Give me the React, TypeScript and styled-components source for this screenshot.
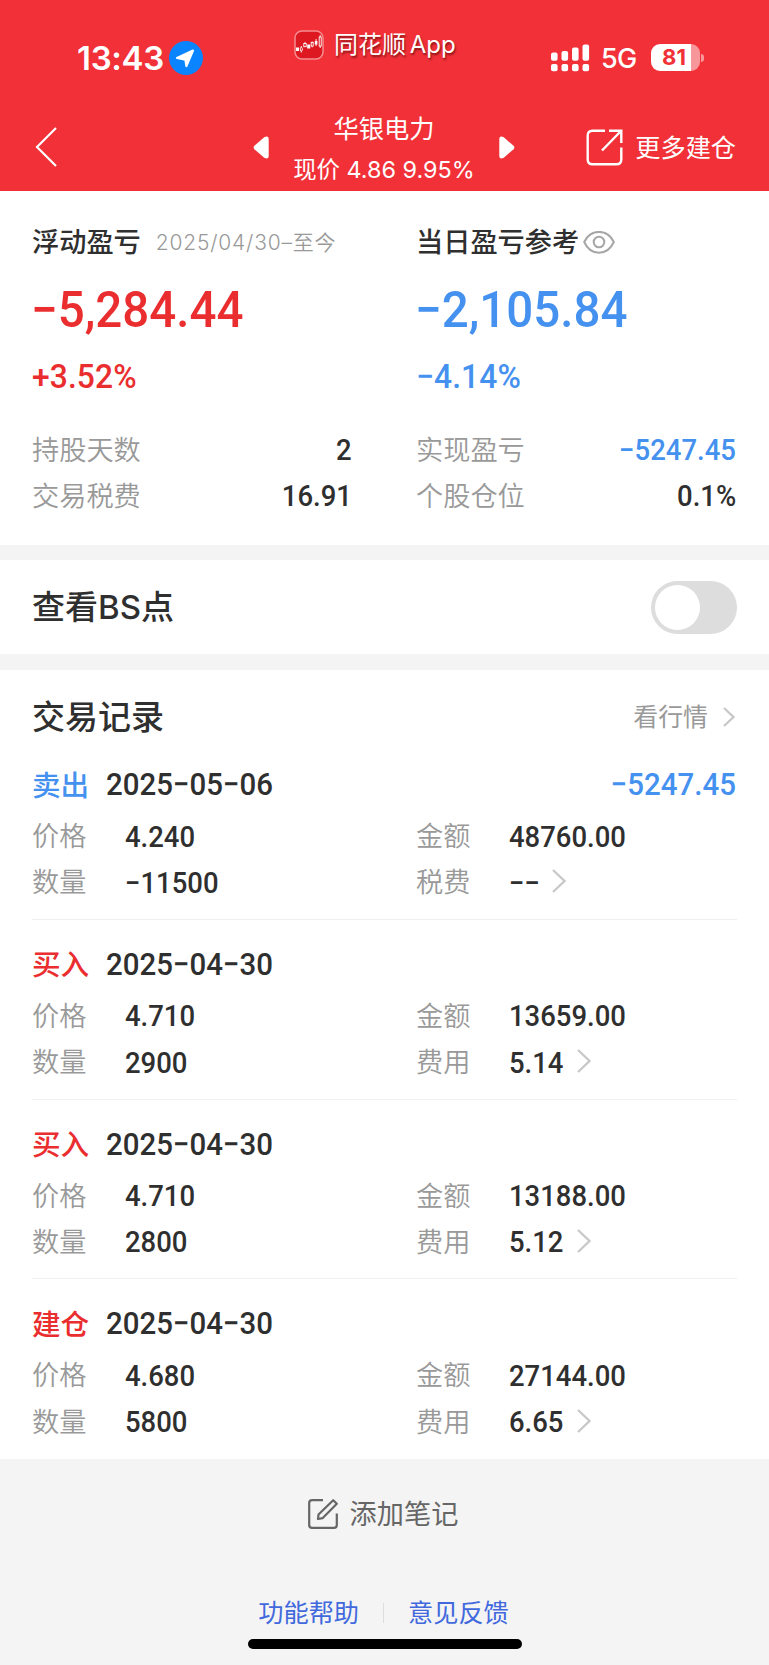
import React from "react";
import styled, { createGlobalStyle } from "styled-components";

const RED = "#f13038";
const TEXT_RED = "#ea2d2e";
const BLUE = "#4591ef";
const DARK = "#2f2f2f";
const GRAY = "#999";

const CJK = `Inter, "Noto Sans CJK SC", sans-serif`;
const NUM = `Roboto, "Noto Sans CJK SC", sans-serif`;

const GlobalStyle = createGlobalStyle`
  * { box-sizing: border-box; }
  body { margin: 0; background: #f4f4f4; font-family: ${CJK}; color: ${DARK}; }
`;

const Page = styled.div`
  width: 769px;
  height: 1665px;
  overflow: hidden;
  display: flex;
  flex-direction: column;
  background: #f4f4f4;
`;

/* ---------- header ---------- */

const Header = styled.header`
  flex: none;
  height: 191px;
  background: ${RED};
  color: #fff;
`;

const StatusBar = styled.div`
  display: grid;
  grid-template-columns: 217px 257px auto;
  height: 103px;
  padding: 29px 0 0 77px;
`;

const Clock = styled.div`
  display: flex;
  align-items: center;
  height: 57px;
  font-size: 33px;
  font-weight: 600;
  line-height: 57px;
  letter-spacing: -0.3px;
`;

const ClockText = styled.span`
  width: 92px;
  padding-top: 1px;
  white-space: nowrap;
`;

const AppTag = styled.div`
  display: flex;
  align-items: center;
  gap: 10px;
  height: 31px;
  font-size: 24px;
  line-height: 31px;
  word-spacing: -3px;
  white-space: nowrap;
  text-shadow: 1px 2px 2px rgba(70, 0, 0, 0.6);
`;

const Signals = styled.div`
  display: flex;
  align-items: center;
  height: 57px;
`;

const Network = styled.span`
  width: 49.5px;
  margin-left: 11px;
  padding-top: 2px;
  font-size: 27px;
  font-weight: 500;
  letter-spacing: -0.7px;
`;

const Battery = styled.div`
  display: flex;
  align-items: center;
  justify-content: center;
  width: 49px;
  height: 27px;
  padding-right: 2px;
  border-radius: 9px;
  background: linear-gradient(90deg, #fff 40px, #f8979b 40px);
  color: ${RED};
  font-size: 22px;
  font-weight: 700;
  line-height: 27px;
`;

const BatteryTip = styled.div`
  width: 3px;
  height: 8px;
  margin-left: 1.5px;
  border-radius: 0 4px 4px 0;
  background: #f8979b;
`;

const Nav = styled.nav`
  display: grid;
  grid-template-columns: 218px 262px 1fr;
  align-items: center;
  height: 88px;
  padding: 0 33px 0 35px;
`;

const StockSwitch = styled.div`
  display: flex;
  align-items: center;
  justify-content: space-between;
`;

const StockInfo = styled.div`
  display: flex;
  flex-direction: column;
  align-items: center;
  padding-top: 4px;
  white-space: nowrap;
`;

const StockName = styled.div`
  font-size: 25.3px;
  line-height: 41px;
`;

const StockQuote = styled.div`
  font-size: 23.4px;
  line-height: 41px;
`;

const MoreButton = styled.div`
  display: flex;
  align-items: center;
  justify-content: flex-end;
  gap: 12px;
  font-size: 25.2px;
  line-height: 38px;
  white-space: nowrap;

  span {
    padding-top: 1px;
  }
`;

/* ---------- summary ---------- */

const Section = styled.section<{ $height: number }>`
  flex: none;
  height: ${(p) => p.$height}px;
  padding: 0 32px;
  background: #fff;
`;

const Gap = styled.div<{ $height: number }>`
  flex: none;
  height: ${(p) => p.$height}px;
`;

const Columns = styled.div`
  display: grid;
  grid-template-columns: 1fr 1fr;
  column-gap: 63px;
`;

const SummaryColumn = styled.div`
  padding-top: 29px;
`;

const SummaryTitle = styled.div`
  display: flex;
  align-items: center;
  gap: 4px;
  height: 46px;
  font-size: 27.2px;
  font-weight: 500;
  line-height: 46px;
  white-space: nowrap;
`;

const DateRange = styled.span`
  margin-left: 11px;
  color: ${GRAY};
  font-size: 21px;
  font-weight: 350;
  letter-spacing: 0.8px;
`;

/* Condensed figures: Roboto narrowed towards the edge that the text is aligned to. */
const Figure = styled.div<{ $color?: string; $align?: "left" | "right" }>`
  color: ${(p) => p.$color ?? DARK};
  font-family: ${NUM};
  font-weight: 500;
  white-space: nowrap;
  transform: scaleX(0.935);
  transform-origin: ${(p) => p.$align ?? "left"} center;
`;

const BigNumber = styled(Figure)`
  margin: 14px 0 0 -1.5px;
  font-size: 50.8px;
  line-height: 60px;
`;

const Percent = styled(Figure)`
  margin-top: 13px;
  font-size: 34px;
  line-height: 46px;
  letter-spacing: 0.1px;
`;

const Stats = styled.div`
  margin-top: 28px;
`;

const StatRow = styled.div`
  display: flex;
  align-items: center;
  justify-content: space-between;
  height: 46.3px;
`;

const Label = styled.span`
  padding-top: 1px;
  color: ${GRAY};
  font-size: 27.2px;
  font-weight: 350;
  line-height: 46px;
  white-space: nowrap;
`;

const Value = styled(Figure)`
  margin-right: 1px;
  font-size: 29.4px;
  line-height: 46px;
`;

/* ---------- BS switch ---------- */

const SettingRow = styled.div`
  display: flex;
  align-items: center;
  justify-content: space-between;
  height: 94px;
`;

const Heading = styled.h2`
  margin: 0;
  font-size: 33px;
  font-weight: 500;
  line-height: 46px;
  white-space: nowrap;
`;

const Toggle = styled.div`
  width: 86px;
  height: 53px;
  padding: 4px;
  border-radius: 27px;
  background: #ddd;
`;

const Knob = styled.div`
  width: 45px;
  height: 45px;
  border-radius: 50%;
  background: #fff;
`;

/* ---------- records ---------- */

const RecordsHead = styled.div`
  display: flex;
  align-items: center;
  justify-content: space-between;
  height: 70px;
  padding-top: 23px;
`;

const QuoteLink = styled.div`
  display: flex;
  align-items: center;
  gap: 15px;
  padding-right: 2px;
  color: ${GRAY};
  font-size: 24.9px;
  line-height: 46px;
`;

const RecordBlock = styled.article`
  height: 179.8px;
  padding-top: 22px;
  border-bottom: 1px solid #f0f0f0;

  &:last-child {
    border-bottom: none;
  }
`;

const RecordHead = styled.div`
  display: flex;
  align-items: center;
  height: 45px;
  margin-bottom: 6px;
  line-height: 45px;
`;

const Action = styled.span<{ $color: string }>`
  width: 74px;
  padding-top: 1px;
  color: ${(p) => p.$color};
  font-size: 28.6px;
  font-weight: 500;
`;

const HeadNumber = styled(Figure)`
  margin-right: 1px;
  margin-left: ${(p) => (p.$align === "right" ? "auto" : "0")};
  font-size: 31.5px;
`;

const Field = styled.div`
  display: grid;
  grid-template-columns: 93px auto 1fr;
  align-items: center;
  height: 46.3px;
`;

const ArrowSlot = styled.span`
  display: flex;
  padding: 0 0 3px 9px;
`;

/* ---------- footer ---------- */

const AddNote = styled.div`
  display: flex;
  flex: none;
  align-items: center;
  justify-content: center;
  gap: 12px;
  height: 110px;
  padding-right: 3px;
  color: #666;
  font-size: 27.2px;
  line-height: 46px;

  span {
    padding-top: 1px;
  }
`;

const FooterLinks = styled.div`
  display: flex;
  flex: none;
  align-items: center;
  justify-content: center;
  height: 70px;
  padding: 17px 2px 0 0;
  color: #4169dd;
  font-size: 25.2px;
  line-height: 46px;
`;

const LinkDivider = styled.span`
  width: 1px;
  height: 20px;
  margin: 0 24px;
  background: #ddd;
`;

const HomeBar = styled.div`
  width: 274px;
  height: 10px;
  margin: 0 auto;
  border-radius: 5px;
  background: #000;
`;

/* ---------- icons ---------- */

const LocationIcon = () => (
  <svg width="34" height="34" viewBox="0 0 34 34">
    <circle cx="17" cy="17" r="17" fill="#0a84ff" />
    <path d="M24 9.6 L17.4 25 L16.4 18.6 L8 17 Z" fill="#fff" stroke="#fff" strokeWidth="2.2" strokeLinejoin="round" />
  </svg>
);

const AppLogo = () => (
  <svg width="30" height="30" viewBox="0 0 30 30">
    <rect x="1" y="1" width="28" height="28" rx="7" fill="#dd1820" stroke="#f58d90" strokeWidth="1.5" />
    <g fill="#fff">
      <rect x="2" y="17.5" width="3" height="3.5" />
      <rect x="13.2" y="14.5" width="3" height="4" />
      <rect x="20.8" y="11" width="2.6" height="3.5" />
    </g>
    <g fill="none" stroke="#fff" strokeWidth="0.9">
      <rect x="6.3" y="17.5" width="2" height="3.5" rx="1" />
      <path d="M7.3 16v1.5M7.3 21v1.5M11 12v1.5M18.2 11.5v1M18.2 16.3v1M22.1 9v7" />
      <rect x="9.8" y="13.5" width="2.4" height="3.2" />
      <rect x="17.2" y="12.5" width="2" height="3.6" />
      <rect x="25.2" y="7" width="2" height="9" />
      <path d="M26.2 5v2M26.2 16v2" />
    </g>
  </svg>
);

const SignalIcon = () => (
  <svg width="39" height="28" viewBox="0 0 39 28" fill="#fff">
    {[8.6, 7, 3.6, 0.6].map((y, i) => (
      <React.Fragment key={i}>
        <rect x={i * 10.5} y={y} width="6.6" height={16.8 - y} rx="2" />
        <rect x={i * 10.5} y="20" width="6.6" height="7.2" rx="2" />
      </React.Fragment>
    ))}
  </svg>
);

const BackIcon = () => (
  <svg width="23" height="40" viewBox="0 0 23 40" fill="none" stroke="#fff" strokeWidth="2.2">
    <path d="M21 1 L2 20 L21 39" />
  </svg>
);

const Triangle = ({ flip }: { flip?: boolean }) => (
  <svg width="16" height="23" viewBox="0 0 16 23">
    <path
      d="M1.4 9.8 L11.2 1.3 Q15.7 -1 15.7 3.4 V19.6 Q15.7 24 11.2 21.7 L1.4 13.2 Q-0.2 11.5 1.4 9.8 Z"
      fill="#fff"
      transform={flip ? "translate(16 0) scale(-1 1)" : undefined}
    />
  </svg>
);

const ShareIcon = () => (
  <svg width="37" height="37" viewBox="0 0 37 37" fill="none" stroke="#fff" strokeWidth="2.4">
    <path d="M19 1.7 H6.5 Q1.7 1.7 1.7 6.5 V30.5 Q1.7 35.3 6.5 35.3 H30.5 Q35.3 35.3 35.3 30.5 V18.5" />
    <path d="M23 1.7 H35.3 V14 M35 2 L16 21.5" />
  </svg>
);

const EyeIcon = () => (
  <svg width="32" height="24" viewBox="0 0 32 24" fill="none" stroke="#a6a6a6" strokeWidth="2">
    <path d="M1.2 11 C4.5 3.8 9.8 0.9 16 0.9 S27.5 3.8 30.8 11 C27.5 18.2 22.2 21.7 16 21.7 S4.5 18.2 1.2 11 Z" />
    <circle cx="16" cy="11" r="5.3" />
  </svg>
);

const Chevron = ({ w, h }: { w: number; h: number }) => (
  <svg width={w} height={h} viewBox={`0 0 ${w} ${h}`} fill="none" stroke="#c8c8c8" strokeWidth="2.3">
    <path d={`M1 1 L${w - 1.5} ${h / 2} L1 ${h - 1}`} />
  </svg>
);

const NoteIcon = () => (
  <svg width="30" height="30" viewBox="0 0 30 30" fill="none" stroke="#666" strokeWidth="2.2" strokeLinejoin="round">
    <path d="M15 1.2 H4 Q1.2 1.2 1.2 4 V26 Q1.2 28.8 4 28.8 H26 Q28.8 28.8 28.8 26 V14.5" />
    <path d="M10 20 L10.5 15.5 L25.2 1.2 L28.8 4.8 L14.5 19.2 Z" />
  </svg>
);

/* ---------- data ---------- */

interface Trade {
  action: string;
  color: string;
  date: string;
  profit?: string;
  price: string;
  amount: string;
  count: string;
  feeLabel: string;
  fee: string;
}

const trades: Trade[] = [
  { action: "卖出", color: BLUE, date: "2025−05−06", profit: "−5247.45", price: "4.240", amount: "48760.00", count: "−11500", feeLabel: "税费", fee: "−−" },
  { action: "买入", color: TEXT_RED, date: "2025−04−30", price: "4.710", amount: "13659.00", count: "2900", feeLabel: "费用", fee: "5.14" },
  { action: "买入", color: TEXT_RED, date: "2025−04−30", price: "4.710", amount: "13188.00", count: "2800", feeLabel: "费用", fee: "5.12" },
  { action: "建仓", color: TEXT_RED, date: "2025−04−30", price: "4.680", amount: "27144.00", count: "5800", feeLabel: "费用", fee: "6.65" },
];

const Stat = ({ label, value, color }: { label: string; value: string; color?: string }) => (
  <StatRow>
    <Label>{label}</Label>
    <Value $color={color} $align="right">
      {value}
    </Value>
  </StatRow>
);

const TradeField = ({ label, value, arrow }: { label: string; value: string; arrow?: boolean }) => (
  <Field>
    <Label>{label}</Label>
    <Value>{value}</Value>
    {arrow && (
      <ArrowSlot>
        <Chevron w={14} h={24} />
      </ArrowSlot>
    )}
  </Field>
);

const Record = ({ trade }: { trade: Trade }) => (
  <RecordBlock>
    <RecordHead>
      <Action $color={trade.color}>{trade.action}</Action>
      <HeadNumber>{trade.date}</HeadNumber>
      {trade.profit && (
        <HeadNumber $color={BLUE} $align="right">
          {trade.profit}
        </HeadNumber>
      )}
    </RecordHead>
    <Columns>
      <TradeField label="价格" value={trade.price} />
      <TradeField label="金额" value={trade.amount} />
      <TradeField label="数量" value={trade.count} />
      <TradeField label={trade.feeLabel} value={trade.fee} arrow />
    </Columns>
  </RecordBlock>
);

export default function App() {
  return (
    <>
      <GlobalStyle />
      <Page>
        <Header>
          <StatusBar>
            <Clock>
              <ClockText>13:43</ClockText>
              <LocationIcon />
            </Clock>
            <AppTag>
              <AppLogo />
              <span>同花顺 App</span>
            </AppTag>
            <Signals>
              <SignalIcon />
              <Network>5G</Network>
              <Battery>81</Battery>
              <BatteryTip />
            </Signals>
          </StatusBar>
          <Nav>
            <BackIcon />
            <StockSwitch>
              <Triangle />
              <StockInfo>
                <StockName>华银电力</StockName>
                <StockQuote>现价 4.86 9.95%</StockQuote>
              </StockInfo>
              <Triangle flip />
            </StockSwitch>
            <MoreButton>
              <ShareIcon />
              <span>更多建仓</span>
            </MoreButton>
          </Nav>
        </Header>

        <Section $height={354}>
          <Columns>
            <SummaryColumn>
              <SummaryTitle>
                浮动盈亏<DateRange>2025/04/30–至今</DateRange>
              </SummaryTitle>
              <BigNumber $color={TEXT_RED}>−5,284.44</BigNumber>
              <Percent $color={TEXT_RED}>+3.52%</Percent>
              <Stats>
                <Stat label="持股天数" value="2" />
                <Stat label="交易税费" value="16.91" />
              </Stats>
            </SummaryColumn>
            <SummaryColumn>
              <SummaryTitle>
                当日盈亏参考
                <EyeIcon />
              </SummaryTitle>
              <BigNumber $color={BLUE}>−2,105.84</BigNumber>
              <Percent $color={BLUE}>−4.14%</Percent>
              <Stats>
                <Stat label="实现盈亏" value="−5247.45" color={BLUE} />
                <Stat label="个股仓位" value="0.1%" />
              </Stats>
            </SummaryColumn>
          </Columns>
        </Section>
        <Gap $height={15} />

        <Section $height={94}>
          <SettingRow>
            <Heading>查看BS点</Heading>
            <Toggle>
              <Knob />
            </Toggle>
          </SettingRow>
        </Section>
        <Gap $height={16} />

        <Section $height={789}>
          <RecordsHead>
            <Heading>交易记录</Heading>
            <QuoteLink>
              看行情
              <Chevron w={12} h={20} />
            </QuoteLink>
          </RecordsHead>
          {trades.map((trade, i) => (
            <Record key={i} trade={trade} />
          ))}
        </Section>

        <AddNote>
          <NoteIcon />
          <span>添加笔记</span>
        </AddNote>
        <FooterLinks>
          <span>功能帮助</span>
          <LinkDivider />
          <span>意见反馈</span>
        </FooterLinks>
        <HomeBar />
      </Page>
    </>
  );
}
